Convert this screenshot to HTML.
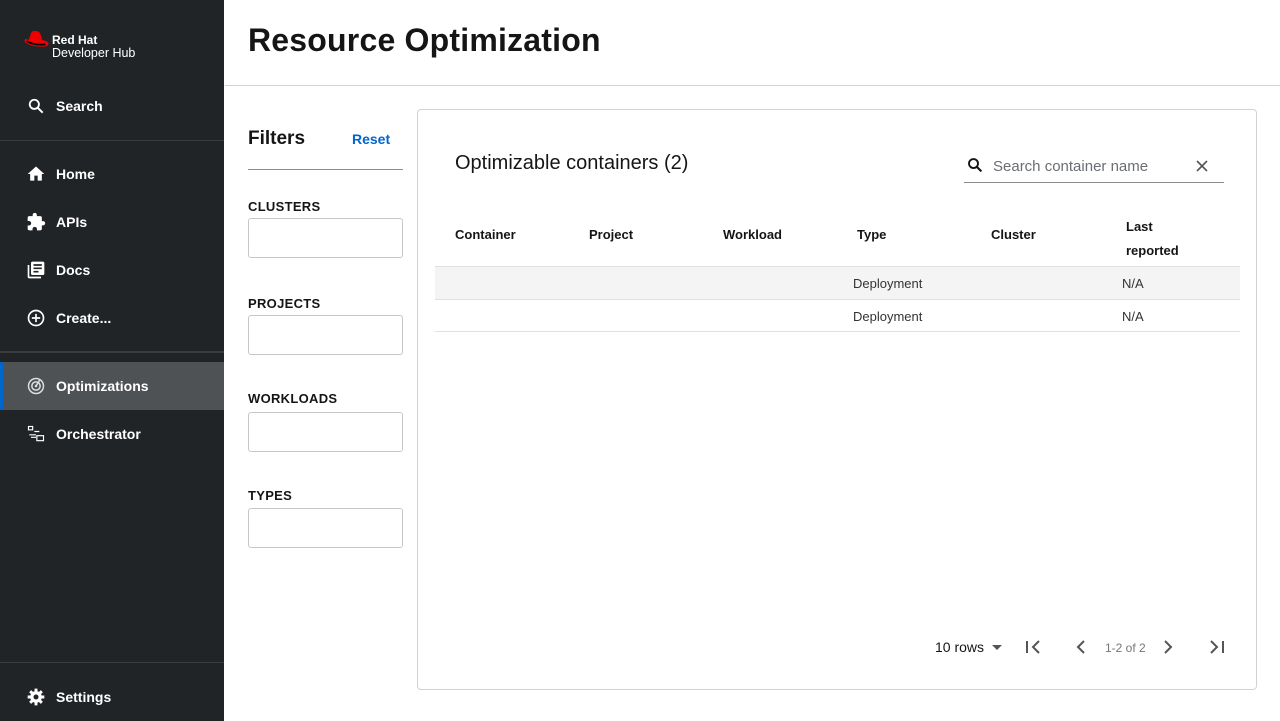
<!DOCTYPE html>
<html><head><style>
*{box-sizing:border-box;margin:0;padding:0}
body{width:1280px;height:721px;overflow:hidden;font-family:"Liberation Sans",sans-serif;background:#fff;position:relative;color:#151515}
.side{position:absolute;left:0;top:0;width:224px;height:721px;background:#212427;color:#fff}
.nav{position:absolute;left:0;width:224px;height:48px;display:flex;align-items:center;padding-left:26px;font-size:14px;font-weight:bold}
.nav svg{width:20px;height:20px;margin-right:10px}
.hr{position:absolute;left:0;width:224px;height:1px;background:#3a3d40}
.main-h{position:absolute;left:225px;top:0;right:0;height:86px;border-bottom:1px solid #d2d2d2}
h1{position:absolute;left:248px;top:22px;font-size:32px;font-weight:bold;letter-spacing:0.2px}
.lab{position:absolute;left:248px;font-size:13px;font-weight:bold;letter-spacing:.3px}
.box{position:absolute;left:248px;width:155px;height:40px;border:1px solid #c7c7c7;border-radius:3px}
.card{position:absolute;left:417px;top:109px;width:840px;height:581px;border:1px solid #d2d2d2;border-radius:4px}
.th{position:absolute;top:227px;font-size:13px;font-weight:bold}
.td{position:absolute;font-size:13px;color:#333}
.pg{position:absolute;top:639px}
</style></head><body>
<div class="side">
 <svg style="position:absolute;left:23px;top:30px" width="27" height="20" viewBox="0 0 24 18"><path d="M5 9 L7 3 Q8 0 12 1 Q15 1 16 5 L17 9 Q22 10 23 12 Q23 15 17 15 Q9 15 3 12 Q0 10 2 8 Z" fill="#e00"/><path d="M3 10 Q10 14 20 13" stroke="#000" stroke-width="1.6" fill="none"/></svg>
 <div style="position:absolute;left:52px;top:33px;font-size:12px;font-weight:bold">Red Hat</div>
 <div style="position:absolute;left:52px;top:46px;font-size:12.5px">Developer Hub</div>
 <div class="nav" style="top:82px"><svg viewBox="0 0 24 24"><circle cx="10" cy="10" r="5.5" stroke="#fff" stroke-width="2.2" fill="none"/><path d="M14 14l6 6" stroke="#fff" stroke-width="2.4"/></svg>Search</div>
 <div class="hr" style="top:140px"></div>
 <div class="nav" style="top:150px"><svg viewBox="0 0 24 24"><path d="M10 20v-6h4v6h5v-8h3L12 3 2 12h3v8z" fill="#fff"/></svg>Home</div>
 <div class="nav" style="top:198px"><svg viewBox="0 0 24 24"><path d="M20.5 11H19V7a2 2 0 0 0-2-2h-4V3.5a2.5 2.5 0 0 0-5 0V5H4a2 2 0 0 0-2 2v3.8h1.5a2.7 2.7 0 0 1 0 5.4H2V20a2 2 0 0 0 2 2h3.8v-1.5a2.7 2.7 0 0 1 5.4 0V22H17a2 2 0 0 0 2-2v-4h1.5a2.5 2.5 0 0 0 0-5z" fill="#fff"/></svg>APIs</div>
 <div class="nav" style="top:246px"><svg viewBox="0 0 24 24"><path d="M4 6H2v14a2 2 0 0 0 2 2h14v-2H4V6zm16-4H8a2 2 0 0 0-2 2v12a2 2 0 0 0 2 2h12a2 2 0 0 0 2-2V4a2 2 0 0 0-2-2zm-1 9H9V9h10v2zm-4 4H9v-2h6v2zm4-8H9V5h10v2z" fill="#fff"/></svg>Docs</div>
 <div class="nav" style="top:294px"><svg viewBox="0 0 24 24"><circle cx="12" cy="12" r="9" stroke="#fff" stroke-width="2" fill="none"/><path d="M12 7v10M7 12h10" stroke="#fff" stroke-width="2"/></svg>Create...</div>
 <div class="hr" style="top:351px;height:2px"></div>
 <div class="nav" style="top:362px;background:#4f5255;border-left:3px solid #0066cc;padding-left:23px"><svg viewBox="0 0 24 24"><circle cx="12" cy="12" r="9" stroke="#ddd" stroke-width="1.8" fill="none"/><circle cx="12" cy="12" r="5" stroke="#ddd" stroke-width="1.8" fill="none"/><circle cx="12" cy="12" r="1.5" fill="#ddd"/><path d="M12 12l5-8" stroke="#ddd" stroke-width="1.8"/></svg>Optimizations</div>
 <div class="nav" style="top:410px"><svg viewBox="0 0 24 24"><rect x="3" y="3" width="5" height="4" stroke="#fff" fill="none" stroke-width="1.4"/><rect x="13" y="14" width="8" height="6" stroke="#fff" fill="none" stroke-width="1.4"/><path d="M10 9h6M4 13h8M6 16h6" stroke="#fff" stroke-width="1.4"/></svg>Orchestrator</div>
 <div class="hr" style="top:662px"></div>
 <div class="nav" style="top:673px"><svg viewBox="0 0 24 24"><circle cx="12" cy="12" r="7" fill="#fff"/><path d="M12 2v20M2 12h20M5 5l14 14M19 5L5 19" stroke="#fff" stroke-width="3.5"/><circle cx="12" cy="12" r="3" fill="#212427"/></svg>Settings</div>
</div>
<div class="main-h"></div>
<h1>Resource Optimization</h1>
<div style="position:absolute;left:248px;top:128px;font-size:19px;font-weight:bold">Filters</div>
<div style="position:absolute;left:352px;top:131px;font-size:14px;font-weight:bold;color:#0066cc">Reset</div>
<div style="position:absolute;left:248px;top:169px;width:155px;height:1px;background:#8a8d90"></div>
<div class="lab" style="top:199px">CLUSTERS</div><div class="box" style="top:218px"></div>
<div class="lab" style="top:296px">PROJECTS</div><div class="box" style="top:315px"></div>
<div class="lab" style="top:391px">WORKLOADS</div><div class="box" style="top:412px"></div>
<div class="lab" style="top:488px">TYPES</div><div class="box" style="top:508px"></div>
<div class="card"></div>
<div style="position:absolute;left:455px;top:152px;font-size:20px">Optimizable containers (2)</div>
<svg style="position:absolute;left:966px;top:156px" width="18" height="18" viewBox="0 0 24 24"><circle cx="10" cy="10" r="6" stroke="#151515" stroke-width="2.5" fill="none"/><path d="M14.5 14.5l6 6" stroke="#151515" stroke-width="2.8"/></svg>
<div style="position:absolute;left:993px;top:158px;font-size:15px;color:#6a6e73">Search container name</div>
<svg style="position:absolute;left:1195px;top:159px" width="14" height="14" viewBox="0 0 14 14"><path d="M2 2l10 10M12 2L2 12" stroke="#555" stroke-width="1.6"/></svg>
<div style="position:absolute;left:964px;top:182px;width:260px;height:1px;background:#8a8d90"></div>
<div class="th" style="left:455px">Container</div>
<div class="th" style="left:589px">Project</div>
<div class="th" style="left:723px">Workload</div>
<div class="th" style="left:857px">Type</div>
<div class="th" style="left:991px">Cluster</div>
<div class="th" style="left:1126px;top:215px;line-height:24px">Last<br>reported</div>
<div style="position:absolute;left:435px;top:266px;width:805px;height:34px;background:#f4f4f4;border-top:1px solid #e0e0e0;border-bottom:1px solid #e0e0e0"></div>
<div style="position:absolute;left:435px;top:331px;width:805px;height:1px;background:#e0e0e0"></div>
<div class="td" style="left:853px;top:276px">Deployment</div><div class="td" style="left:1122px;top:276px">N/A</div>
<div class="td" style="left:853px;top:309px">Deployment</div><div class="td" style="left:1122px;top:309px">N/A</div>
<div style="position:absolute;left:935px;top:639px;font-size:14px">10 rows</div>
<div style="position:absolute;left:992px;top:645px;border:5px solid transparent;border-top-color:#555;border-bottom:0"></div>
<svg class="pg" style="left:1024px" width="20" height="16" viewBox="0 0 20 16"><path d="M3 2v12M15 2l-6 6 6 6" stroke="#555" stroke-width="2" fill="none"/></svg>
<svg class="pg" style="left:1073px" width="16" height="16" viewBox="0 0 16 16"><path d="M11 2l-6 6 6 6" stroke="#555" stroke-width="2" fill="none"/></svg>
<div style="position:absolute;left:1105px;top:641px;font-size:12px;color:#777">1-2 of 2</div>
<svg class="pg" style="left:1160px" width="16" height="16" viewBox="0 0 16 16"><path d="M5 2l6 6-6 6" stroke="#555" stroke-width="2" fill="none"/></svg>
<svg class="pg" style="left:1206px" width="20" height="16" viewBox="0 0 20 16"><path d="M17 2v12M5 2l6 6-6 6" stroke="#555" stroke-width="2" fill="none"/></svg>
</body></html>
